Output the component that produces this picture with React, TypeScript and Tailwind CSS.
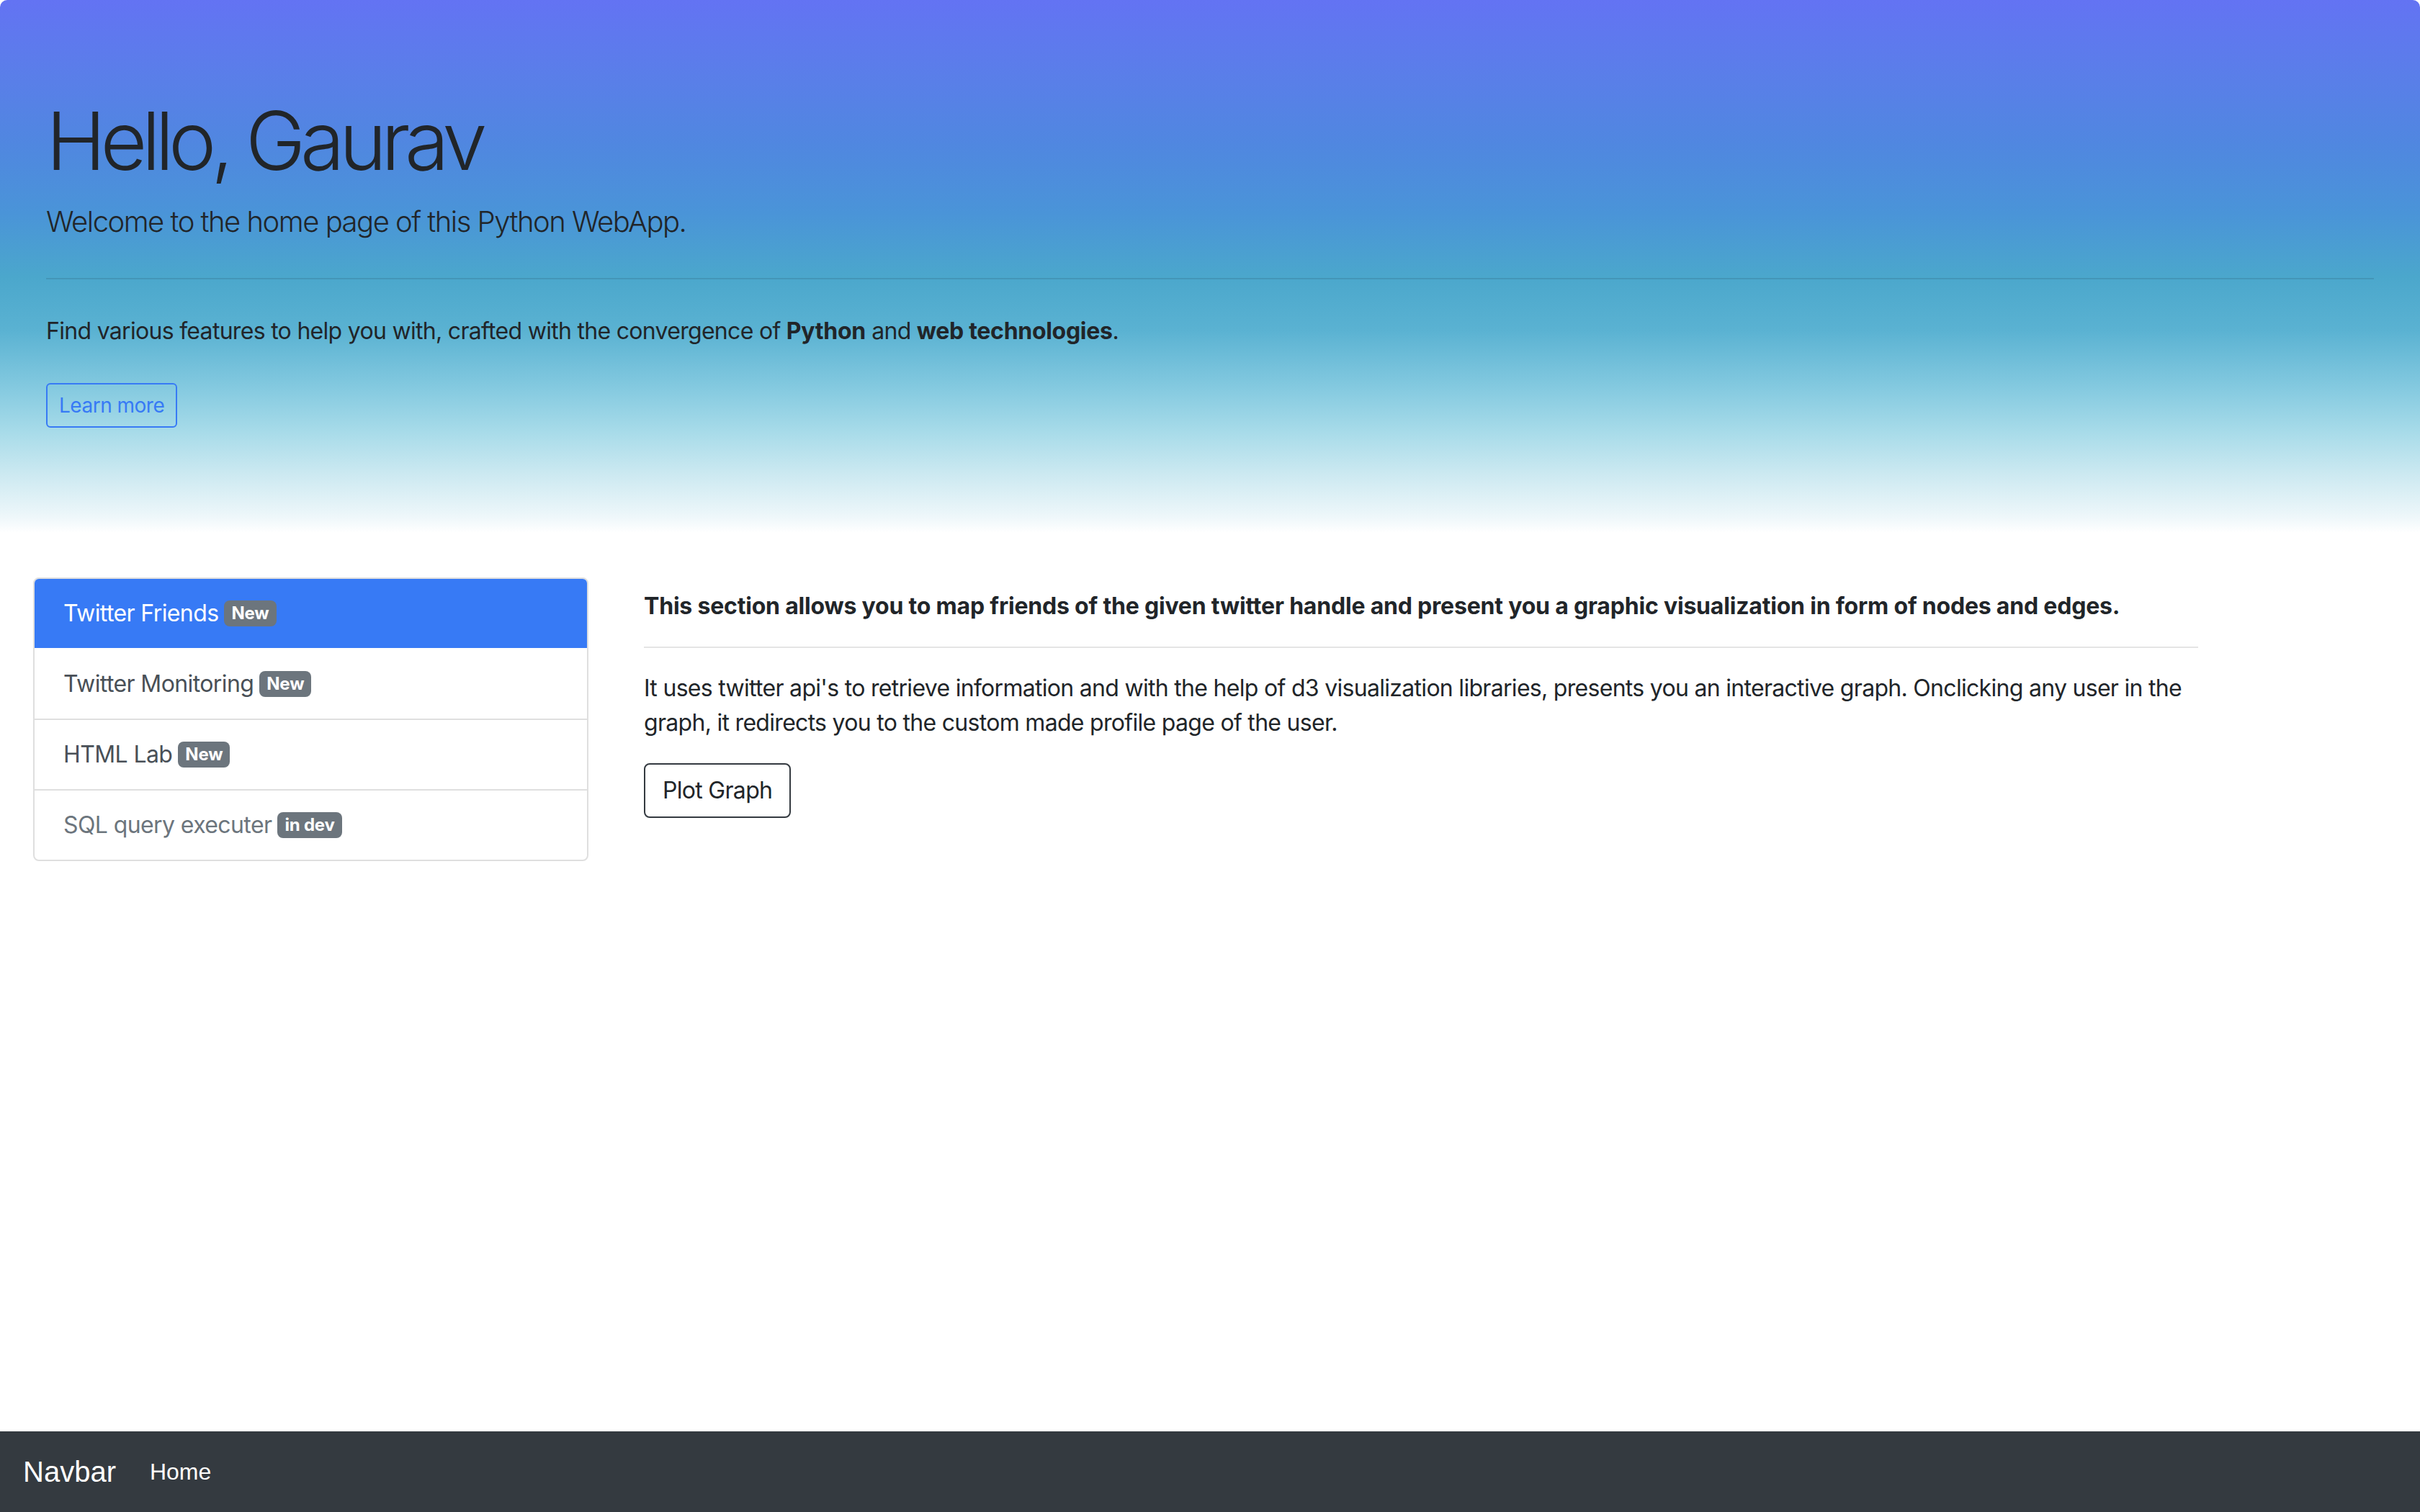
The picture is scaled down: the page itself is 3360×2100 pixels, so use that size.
import React from 'react';

type Feature = {
  label: string;
  badge: string;
  state: 'active' | 'normal' | 'disabled';
};

const features: Feature[] = [
  { label: 'Twitter Friends', badge: 'New', state: 'active' },
  { label: 'Twitter Monitoring', badge: 'New', state: 'normal' },
  { label: 'HTML Lab', badge: 'New', state: 'normal' },
  { label: 'SQL query executer', badge: 'in dev', state: 'disabled' },
];

const Badge: React.FC<{ text: string }> = ({ text }) => (
  <span className="ml-[8px] inline-block rounded-[8px] bg-[#6c757d] px-[10px] py-[6px] align-[3px] text-[24px] font-bold leading-none tracking-[-0.2px] text-white">
    {text}
  </span>
);

const App: React.FC = () => {
  return (
    <div
      className="flex min-h-screen flex-col bg-white text-[#212529]"
      style={{ fontFamily: 'Inter, "Noto Sans", "Liberation Sans", sans-serif' }}
    >
      {/* Jumbotron */}
      <div className="h-[740px] rounded-t-[10px] bg-[linear-gradient(180deg,#6373f3_0%,#5a7ee9_14%,#5087e0_27%,#4a94d8_40%,#4ba7cc_52%,#5ab2d2_62%,#85cae0_73%,#a7dbe9_81%,#cce9f1_89%,#eef7fa_97%,#ffffff_100%)] px-[64px] pt-[128px]">
        <h1 className="mb-[16px] text-[112px] font-light leading-[1.2] tracking-[-7.5px]">Hello, Gaurav</h1>
        <p className="text-[40px] font-light leading-[1.5] tracking-[-1.5px]">
          Welcome to the home page of this Python WebApp.
        </p>
        <hr className="my-[48px] border-t-2 border-black/10" />
        <p className="text-[32px] leading-[1.5] tracking-[-0.7px]">
          Find various features to help you with, crafted with the convergence of{' '}
          <b className="tracking-[-0.3px]">Python</b> and <b className="tracking-[-0.3px]">web technologies</b>.
        </p>
        <button className="mt-[48px] rounded-[6px] border-2 border-[#377af5] px-[16px] py-[8px] text-[28px] leading-[1.5] tracking-[-0.5px] text-[#377af5]">
          Learn more
        </button>
      </div>

      {/* Features */}
      <div className="mt-[62px] flex items-start gap-[77px] pl-[46px]">
        <div className="w-[771px] overflow-hidden rounded-[8px] border-2 border-[#dfdfdf]">
          {features.map((f, i) => (
            <div
              key={f.label}
              className={
                f.state === 'active'
                  ? 'bg-[#377af5] px-[40px] py-[24px] text-[32px] leading-[1.5] tracking-[-0.6px] text-white'
                  : f.state === 'disabled'
                    ? 'border-t-2 border-[#dfdfdf] px-[40px] py-[24px] text-[32px] leading-[1.5] tracking-[-0.6px] text-[#6c757d]'
                    : `${i === 1 ? 'pt-[26px]' : 'border-t-2 border-[#dfdfdf] pt-[24px]'} px-[40px] pb-[24px] text-[32px] leading-[1.5] tracking-[-0.6px] text-[#495057]`
              }
            >
              {f.label}
              <Badge text={f.badge} />
            </div>
          ))}
        </div>

        <div className="w-[2158px] pt-[16px] text-[32px] leading-[1.5]">
          <p className="font-bold tracking-[-0.2px]">
            This section allows you to map friends of the given twitter handle and present you a graphic visualization
            in form of nodes and edges.
          </p>
          <hr className="my-[32px] border-t-2 border-black/10" />
          <p className="mb-[32px] tracking-[-0.7px]">
            It uses twitter api's to retrieve information and with the help of d3 visualization libraries, presents you
            an interactive graph. Onclicking any user in the graph, it redirects you to the custom made profile page of
            the user.
          </p>
          <button className="rounded-[8px] border-2 border-[#343a40] px-[24px] py-[12px] text-[32px] leading-[1.5] tracking-[-0.7px] text-[#212529]">
            Plot Graph
          </button>
        </div>
      </div>

      {/* Navbar */}
      <nav
        className="mt-auto flex h-[112px] items-center bg-[#343a40] pl-[32px] text-white"
        style={{ fontFamily: '"Liberation Sans", Arial, sans-serif' }}
      >
        <span className="text-[40px]">Navbar</span>
        <span className="ml-[47px] text-[32px]">Home</span>
      </nav>
    </div>
  );
};

export default App;
